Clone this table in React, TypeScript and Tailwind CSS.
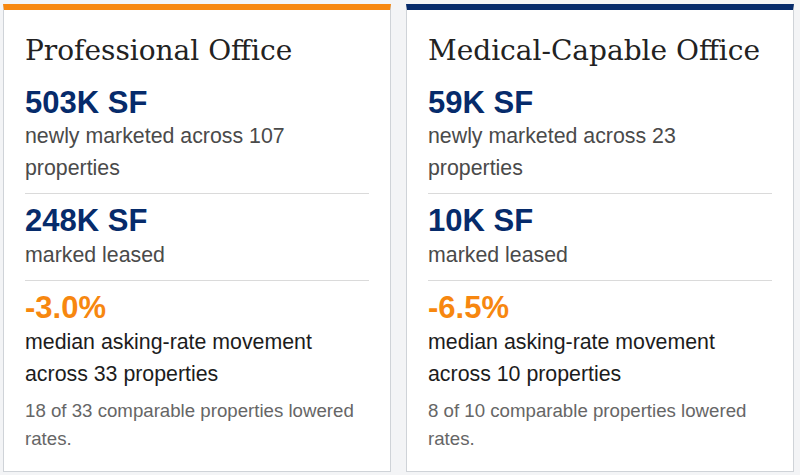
import React from "react";

type Card = {
  title: string;
  accent: "orange" | "navy";
  newSf: string;
  newProps: number;
  leasedSf: string;
  rate: string;
  rateProps: number;
  lowered: number;
};

const cards: Card[] = [
  {
    title: "Professional Office",
    accent: "orange",
    newSf: "503K SF",
    newProps: 107,
    leasedSf: "248K SF",
    rate: "-3.0%",
    rateProps: 33,
    lowered: 18,
  },
  {
    title: "Medical-Capable Office",
    accent: "navy",
    newSf: "59K SF",
    newProps: 23,
    leasedSf: "10K SF",
    rate: "-6.5%",
    rateProps: 10,
    lowered: 8,
  },
];

const sans = "font-['Liberation_Sans',Arial,sans-serif]";

function SegmentCard({ card }: { card: Card }) {
  return (
    <div
      className={`bg-white border border-[#cfd3d8] border-t-[6px] px-[21px] pt-[24px] ${
        card.accent === "orange" ? "border-t-[#f7870f]" : "border-t-[#062b6b]"
      }`}
    >
      <h2 className="font-['DejaVu_Serif',Georgia,serif] text-[28px] leading-[1.2] text-[#222] mb-[17px]">
        {card.title}
      </h2>

      {/* Newly marketed */}
      <div className={`${sans} border-b border-[#dadada] pb-[9px]`}>
        <p className="text-[31px] leading-[1.15] font-bold text-[#062b6b]">{card.newSf}</p>
        <p className="text-[21.33px] leading-[32px] text-[#4a4a4a]">
          newly marketed across {card.newProps} properties
        </p>
      </div>

      {/* Leased */}
      <div className={`${sans} border-b border-[#dadada] pt-[9px] pb-[9px]`}>
        <p className="text-[31px] leading-[1.15] font-bold text-[#062b6b]">{card.leasedSf}</p>
        <p className="text-[21.33px] leading-[32px] text-[#4a4a4a]">marked leased</p>
      </div>

      {/* Asking rate */}
      <div className={`${sans} pt-[9px]`}>
        <p className="text-[31px] leading-[1.15] font-bold text-[#f7870f]">{card.rate}</p>
        <p className="text-[21.33px] leading-[32px] text-[#1c1c1c]">
          median asking-rate movement across {card.rateProps} properties
        </p>
        <p className="mt-[7px] text-[18.67px] leading-[28px] text-[#666]">
          {card.lowered} of {card.rateProps} comparable properties lowered rates.
        </p>
      </div>
    </div>
  );
}

export default function App() {
  return (
    <div className="h-[475px] bg-[#f3f4f6] pt-[4px] pb-[3px] pl-[3px] pr-[6px] grid grid-cols-2 gap-[15px]">
      {cards.map((c) => (
        <SegmentCard key={c.title} card={c} />
      ))}
    </div>
  );
}
